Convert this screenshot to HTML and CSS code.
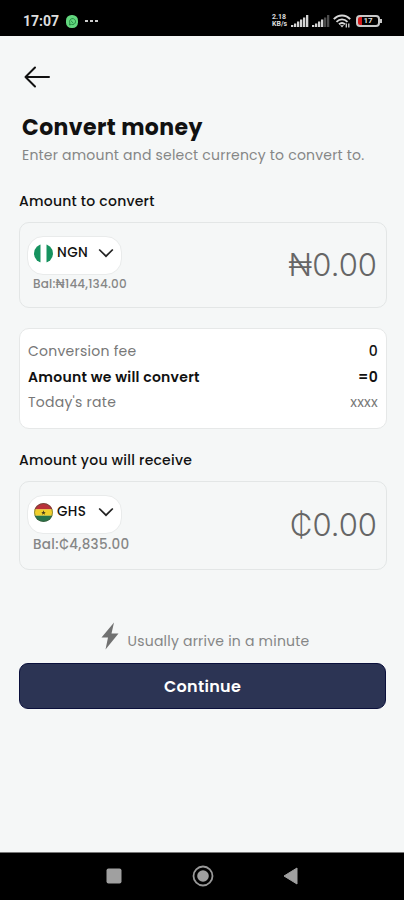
FILE: index.html
```html
<!DOCTYPE html>
<html lang="en">
<head>
  <meta charset="UTF-8" />
  <meta name="viewport" content="width=device-width, initial-scale=1.0"/>
  <title>Convert money</title>
  <link rel="stylesheet" href="styles.css">
</head>
<body>
  <header class="status-bar">
    <span class="time">17:07</span>
    <svg class="chat-icon" width="12" height="13" viewBox="0 0 12 13">
      <rect width="12" height="13" rx="5.5" fill="#62d77e"/>
      <path d="M3.500 10l.4-2A3 3 0 1 1 5.500 9.400zM4.700 5.500l2.600 2.600" fill="none" stroke="#258a43" stroke-width="1"/>
    </svg>
    <span class="more"><i></i><i></i><i></i></span>
    <div class="status-right">
      <div class="speed"><span>2.18</span><span>KB/s</span></div>
      <svg width="18" height="12" viewBox="0 0 18 12" fill="#d4d4d4">
        <path d="M0 10h2.300v2H0zM3 8.500h2.300V12H3zM6 6.500h2.300V12H6zM9 4.500h2.300V12H9zM12 2.500h2.300V12H12zM15 0h2.300v12H15z"/>
      </svg>
      <svg width="18" height="12" viewBox="0 0 18 12" fill="#d4d4d4">
        <path d="M0 10h2.300v2H0zM3 8.500h2.300V12H3zM6 6.500h2.300V12H6zM9 4.500h2.300V12H9z"/>
        <path d="M12 2.500h2.300V12H12zM15 0h2.300v12H15z" fill="#4c4c4c"/>
      </svg>
      <svg width="18" height="14" viewBox="0 0 18 14" fill="none" stroke="#d8d8d8" stroke-width="1.900">
        <path d="M.8 5.200C5.500.2 12.500.2 17.200 5.200M3.500 7.800c3.200-3.200 7.800-3.200 11 0M6 10.300c1.800-1.700 4.200-1.700 6 0"/>
        <path d="M7 11.300h4L9 13.500z" fill="#d8d8d8" stroke="none"/>
        <path d="M13.300 9.500v4M15.800 9.500v4" stroke-width="1.300"/>
      </svg>
      <div class="battery"><span>17</span></div>
    </div>
  </header>

  <main>
    <svg class="back" width="27" height="22" viewBox="0 0 27 22" fill="none" stroke="#111" stroke-width="2" stroke-linecap="round" stroke-linejoin="round">
      <path d="M11 1.500L1.500 11l9.500 9.500M1.500 11H25"/>
    </svg>
    <h1>Convert money</h1>
    <p class="subtitle">Enter amount and select currency to convert to.</p>

    <h2 class="label-from">Amount to convert</h2>
    <section class="amount-card from">
      <div class="wallet">
        <div class="currency">
          <svg width="19" height="19" viewBox="0 0 19 19">
            <clipPath id="ng"><circle cx="9.500" cy="9.500" r="9.500"/></clipPath>
            <g clip-path="url(#ng)">
              <rect width="19" height="19" fill="#fff"/>
              <rect width="6.500" height="19" fill="#16925f"/>
              <rect x="12.500" width="6.500" height="19" fill="#16925f"/>
            </g>
          </svg>
          <span>NGN</span>
          <svg class="chevron" width="16" height="10" viewBox="0 0 16 10"><path d="M1.200 1.500L8 8.200l6.800-6.700"/></svg>
        </div>
        <span class="balance">Bal:₦144,134.00</span>
      </div>
      <span class="amount">₦0.00</span>
    </section>

    <section class="summary">
      <div class="row"><span>Conversion fee</span><b>0</b></div>
      <div class="row total"><span>Amount we will convert</span><b>=0</b></div>
      <div class="row"><span>Today's rate</span><span>xxxx</span></div>
    </section>

    <h2 class="label-to">Amount you will receive</h2>
    <section class="amount-card to">
      <div class="wallet">
        <div class="currency">
          <svg width="19" height="19" viewBox="0 0 19 19">
            <clipPath id="gh"><circle cx="9.500" cy="9.500" r="9.500"/></clipPath>
            <g clip-path="url(#gh)">
              <rect width="19" height="6.500" fill="#b9313a"/>
              <rect y="6.300" width="19" height="6.500" fill="#f0cf2c"/>
              <rect y="12.700" width="19" height="6.500" fill="#28734a"/>
              <path d="M9.500 7.300l.6 1.600h1.700l-1.300 1.100.5 1.700-1.500-1-1.500 1 .5-1.700-1.300-1.100h1.700z" fill="#493e1c"/>
            </g>
            <circle cx="9.500" cy="9.500" r="9" fill="none" stroke="#46573b" stroke-opacity=".6"/>
          </svg>
          <span>GHS</span>
          <svg class="chevron" width="16" height="10" viewBox="0 0 16 10"><path d="M1.200 1.500L8 8.200l6.800-6.700"/></svg>
        </div>
        <span class="balance">Bal:₵4,835.00</span>
      </div>
      <span class="amount">₵0.00</span>
    </section>

    <div class="arrival">
      <svg width="18" height="28" viewBox="0 0 18 28"><path d="M13 .5L.5 15.500H7L4.500 27.500 17.500 11.500H10.500z" fill="#707171"/></svg>
      <span>Usually arrive in a minute</span>
    </div>
    <button class="continue">Continue</button>
  </main>

  <footer class="nav-bar">
    <svg width="16" height="16" viewBox="0 0 16 16"><rect x=".5" y=".5" width="15" height="15" rx="2" fill="#a0a0a0"/></svg>
    <svg width="22" height="22" viewBox="0 0 22 22"><circle cx="11" cy="11" r="9.500" fill="none" stroke="#999" stroke-width="1.800"/><circle cx="11" cy="11" r="5.800" fill="#a0a0a0"/></svg>
    <svg width="16" height="18" viewBox="0 0 16 18"><path d="M1 9L14 1v16z" fill="#a0a0a0" stroke="#a0a0a0" stroke-linejoin="round"/></svg>
  </footer>
</body>
</html>
```
FILE: styles.css
```css
* { box-sizing: border-box; }
body {
  margin: 0;
  height: 900px;
  display: flex;
  flex-direction: column;
  font-family: Poppins, Inter, sans-serif;
  background: #f5f7f7;
  color: #111;
}
h1, h2, p { margin: 0; }
svg { flex: none; display: block; }
span, b { white-space: nowrap; }

.status-bar {
  flex: none;
  height: 36px;
  padding: 6px 22px 0 23px;
  background: #000;
  color: #ddd;
  display: flex;
  align-items: center;
}
.time {
  width: 43px;
  font: 700 14px Roboto, sans-serif;
}
.more {
  display: flex;
  gap: 2px;
  margin-left: 7px;
}
.more i {
  width: 3px;
  height: 2px;
  background: #ccc;
}
.status-right {
  margin-left: auto;
  display: flex;
  align-items: center;
  gap: 3px;
}
.speed {
  display: flex;
  flex-direction: column;
  width: 16px;
  font: 700 7px/7px Roboto, sans-serif;
}
.battery {
  position: relative;
  width: 24px;
  height: 12px;
  margin: 0 2px;
  border: 2px solid #c8c8c8;
  border-radius: 4px;
  background: linear-gradient(90deg, #d31919 4px, #000 4px);
  font: 700 8px/8px Roboto, sans-serif;
  text-align: center;
}
.battery::after {
  content: "";
  position: absolute;
  right: -4px;
  top: 2px;
  width: 2px;
  height: 4px;
  background: #c8c8c8;
}

main {
  flex: 1;
  padding: 30px 17px 0 19px;
}
.back { margin-left: 5px; }
h1 {
  margin: 25px 0 0 3px;
  font-size: 22px;
  line-height: 30px;
  font-weight: 700;
  letter-spacing: 0.4px;
}
.subtitle {
  margin: 2px 0 0 3px;
  font-size: 14px;
  line-height: 20px;
  color: #858686;
  letter-spacing: 0.2px;
  white-space: nowrap;
}
h2 {
  font-size: 14px;
  line-height: 20px;
  font-weight: 500;
  letter-spacing: 0.23px;
}
.label-from { margin-top: 26px; }
.label-to { margin-top: 21px; }

.amount-card {
  display: flex;
  justify-content: space-between;
  margin-top: 11px;
  border: 1px solid #e3e6e6;
  border-radius: 10px;
  padding: 13px 9px 0 7px;
}
.from { height: 86px; }
.to { height: 89px; }
.currency {
  width: 95px;
  height: 39px;
  display: flex;
  align-items: center;
  padding: 0 7px 5px 6px;
  background: #fff;
  border: 1px solid #e9ebeb;
  border-radius: 16px;
  font-size: 13.5px;
  font-weight: 500;
}
.currency span {
  margin-left: 4px;
  letter-spacing: 0.4px;
}
.chevron {
  margin-left: auto;
  fill: none;
  stroke: #222;
  stroke-width: 1.7;
}
.balance {
  display: block;
  margin-left: 6px;
  font-size: 12px;
  line-height: 18px;
  font-weight: 500;
  color: #858686;
  letter-spacing: 0.2px;
}
.to .balance {
  margin-top: 2px;
  font-size: 13.5px;
  letter-spacing: 0.35px;
}
.amount {
  margin-top: 11px;
  font: 300 31px/36px Inter, sans-serif;
  color: #666;
}
.to .amount { margin-top: 12px; }

.summary {
  height: 101px;
  margin-top: 20px;
  padding: 10px 8px 0;
  background: #fff;
  border: 1px solid #e6e8e8;
  border-radius: 10px;
}
.row {
  display: flex;
  justify-content: space-between;
  font-size: 14px;
  line-height: 25.7px;
  color: #777;
  letter-spacing: 0.25px;
}
.row b {
  font-weight: 500;
  color: #111;
}
.total, .total b {
  font-weight: 600;
  color: #111;
}

.arrival {
  height: 28px;
  margin-top: 52px;
  display: flex;
  justify-content: center;
  gap: 9px;
  padding-left: 4px;
  font-size: 14px;
  color: #858686;
}
.arrival span {
  margin-top: 9px;
  line-height: 20px;
  letter-spacing: 0.22px;
}
.continue {
  display: block;
  width: 367px;
  height: 46px;
  margin-top: 13px;
  background: #2c3454;
  border: 1.5px solid #0b103c;
  border-radius: 9px;
  color: #fff;
  font: 600 16px Poppins, Inter, sans-serif;
  letter-spacing: 0.3px;
}

.nav-bar {
  flex: none;
  height: 48px;
  background: #000;
  border-top: 1px solid #777;
  display: flex;
  align-items: center;
  padding: 0 105px 2px 106px;
  justify-content: space-between;
}
```
